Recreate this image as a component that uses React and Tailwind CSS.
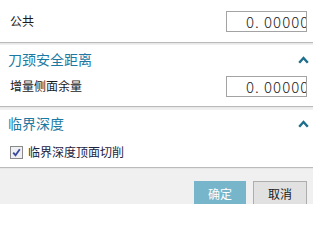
import React from 'react';

const font = { fontFamily: '"Noto Sans CJK SC", "Microsoft YaHei", sans-serif' };

const ChevronUp = () => (
  <svg width="11" height="8" viewBox="0 0 11 8" className="block">
    <path d="M1.2 6.8 L5.5 2 L9.8 6.8" fill="none" stroke="#1d6d8c" strokeWidth="2.4" />
  </svg>
);

const NumberBox = ({ value }) => (
  <div className="w-[81px] h-[21px] border border-[#a3a3a3] bg-white overflow-hidden flex items-center">
    <span className="pl-[19px] whitespace-nowrap text-[15px] leading-none font-light text-[#1a1a1a] tracking-[1px]">{value}</span>
  </div>
);

const Header = ({ title }) => (
  <div className="flex items-center justify-between pl-[8px] pr-[4px] text-[14px] text-[#1b7aa3]">
    <span>{title}</span>
    <ChevronUp />
  </div>
);

export default function App() {
  return (
    <div style={font} className="w-[313px] h-[204px] bg-[#f0f0f0] overflow-hidden flex flex-col text-[12px] text-[#1a1a1a]">
      <div className="h-[42px] shrink-0 bg-white flex items-center justify-between pl-[10px] pr-[6px] shadow-[0_1px_1px_rgba(0,0,0,0.22)]">
        <span>公共</span>
        <NumberBox value="0. 00000" />
      </div>

      <div className="mt-[3px] h-[61px] shrink-0 bg-white flex flex-col shadow-[0_1px_1px_rgba(0,0,0,0.22)]">
        <div className="h-[29px] flex flex-col justify-center">
          <Header title="刀颈安全距离" />
        </div>
        <div className="h-[24px] flex items-center justify-between pl-[10px] pr-[6px]">
          <span>增量侧面余量</span>
          <NumberBox value="0. 00000" />
        </div>
      </div>

      <div className="mt-[4px] h-[57px] shrink-0 bg-white flex flex-col shadow-[0_1px_1px_rgba(0,0,0,0.22)]">
        <div className="h-[27px] flex flex-col justify-center">
          <Header title="临界深度" />
        </div>
        <div className="h-[30px] flex items-center gap-[5px] pl-[10px]">
          <span className="w-[13px] h-[13px] border border-[#8a8a8a] bg-[#eef0f4] flex items-center justify-center">
            <svg width="9" height="9" viewBox="0 0 9 9">
              <path d="M1.2 4.6 L3.5 7.2 L7.8 1.2" fill="none" stroke="#3b4a9c" strokeWidth="1.8" />
            </svg>
          </span>
          <span className="text-[#1c2340]">临界深度顶面切削</span>
        </div>
      </div>

      <div className="mt-[14px] flex justify-end gap-[7px] pr-[6px]">
        <button className="w-[52px] h-[26px] bg-[#77b5ca] text-white text-[12px]">确定</button>
        <button className="w-[54px] h-[26px] bg-[#e1e1e1] border border-[#adadad] text-[#1a1a1a] text-[12px]">取消</button>
      </div>
    </div>
  );
}
